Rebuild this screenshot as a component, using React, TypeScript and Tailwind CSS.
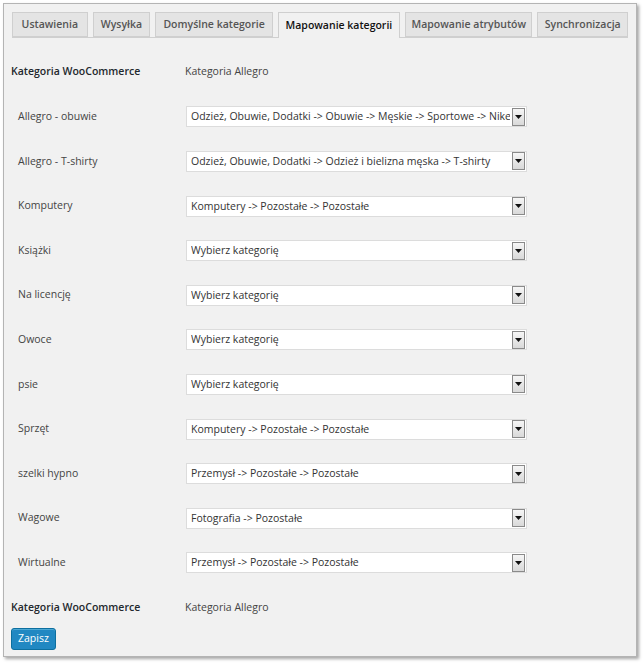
import { ReactNode } from "react";

const tabs = [
  { label: "Ustawienia", w: "w-[76px]" },
  { label: "Wysyłka", w: "w-[58px]" },
  { label: "Domyślne kategorie", w: "w-[118px]" },
  { label: "Mapowanie kategorii", w: "w-[123px]", active: true },
  { label: "Mapowanie atrybutów", w: "w-[128px]" },
  { label: "Synchronizacja", w: "w-[91px]" },
];

const rows = [
  { name: "Allegro - obuwie", value: "Odzież, Obuwie, Dodatki -> Obuwie -> Męskie -> Sportowe -> Nike" },
  { name: "Allegro - T-shirty", value: "Odzież, Obuwie, Dodatki -> Odzież i bielizna męska -> T-shirty" },
  { name: "Komputery", value: "Komputery -> Pozostałe -> Pozostałe" },
  { name: "Książki", value: "Wybierz kategorię" },
  { name: "Na licencję", value: "Wybierz kategorię" },
  { name: "Owoce", value: "Wybierz kategorię" },
  { name: "psie", value: "Wybierz kategorię" },
  { name: "Sprzęt", value: "Komputery -> Pozostałe -> Pozostałe" },
  { name: "szelki hypno", value: "Przemysł -> Pozostałe -> Pozostałe" },
  { name: "Wagowe", value: "Fotografia -> Pozostałe" },
  { name: "Wirtualne", value: "Przemysł -> Pozostałe -> Pozostałe" },
];

const Row = ({ children }: { children: ReactNode }) => (
  <div className="flex h-[44.6px] items-center">{children}</div>
);

const FakeSelect = ({ value }: { value: string }) => (
  <div className="flex h-[21px] w-[341px] items-center border border-[#dcdcdc] bg-white pl-[4px] pr-[1px]">
    <span className="flex-1 overflow-hidden whitespace-nowrap text-[10.5px] leading-[15px] text-[#333]">{value}</span>
    <span className="ml-[2px] flex h-[18px] w-[13px] shrink-0 items-center justify-center border border-[#8a8a8a] bg-gradient-to-b from-[#f6f6f6] to-[#d9d9d9]">
      <svg width="7" height="4" viewBox="0 0 7 4">
        <path d="M0 0h7L3.5 4z" fill="#111" />
      </svg>
    </span>
  </div>
);

const App = () => {
  return (
    <div
      className="h-[663px] w-[644px] bg-white pl-[3px] pt-[3px]"
      style={{ fontFamily: '"Open Sans", "Noto Sans", sans-serif' }}
    >
      <div className="h-[654px] w-[634px] border border-[#b4b4b4] bg-[#f1f1f1] shadow-[2px_2px_3px_rgba(0,0,0,0.35)]">
        <div className="mx-[8px] mt-[8px] flex gap-[5px] border-b border-[#cfcfcf]">
          {tabs.map((t) => (
            <div
              key={t.label}
              className={
                t.active
                  ? `-mb-px flex h-[26px] items-center justify-center whitespace-nowrap border border-b-0 border-[#cfcfcf] bg-[#f1f1f1] text-[10.5px] font-semibold text-[#111] ${t.w}`
                  : `flex h-[25px] items-center justify-center whitespace-nowrap border border-[#cfcfcf] bg-[#e4e4e4] text-[10.5px] font-semibold text-[#555] ${t.w}`
              }
            >
              {t.label}
            </div>
          ))}
        </div>

        <div className="px-[7px] pt-[12px]">
          <Row>
            <span className="w-[174px] text-[10.5px] font-semibold text-[#23282d]">Kategoria WooCommerce</span>
            <span className="text-[10.5px] text-[#444]">Kategoria Allegro</span>
          </Row>
          {rows.map((r) => (
            <Row key={r.name}>
              <span className="w-[175px] pl-[7px] text-[10.5px] text-[#444]">{r.name}</span>
              <FakeSelect value={r.value} />
            </Row>
          ))}
          <Row>
            <span className="w-[174px] text-[10.5px] font-semibold text-[#23282d]">Kategoria WooCommerce</span>
            <span className="text-[10.5px] text-[#444]">Kategoria Allegro</span>
          </Row>
          <button
            type="button"
            className="-mt-[2px] block h-[22px] rounded-[3px] border border-[#0d6f9f] bg-[#2188c2] px-[6px] text-[10.5px] leading-none text-white shadow-[inset_0_1px_0_rgba(120,200,230,0.5)]"
          >
            Zapisz
          </button>
        </div>
      </div>
    </div>
  );
};

export default App;
